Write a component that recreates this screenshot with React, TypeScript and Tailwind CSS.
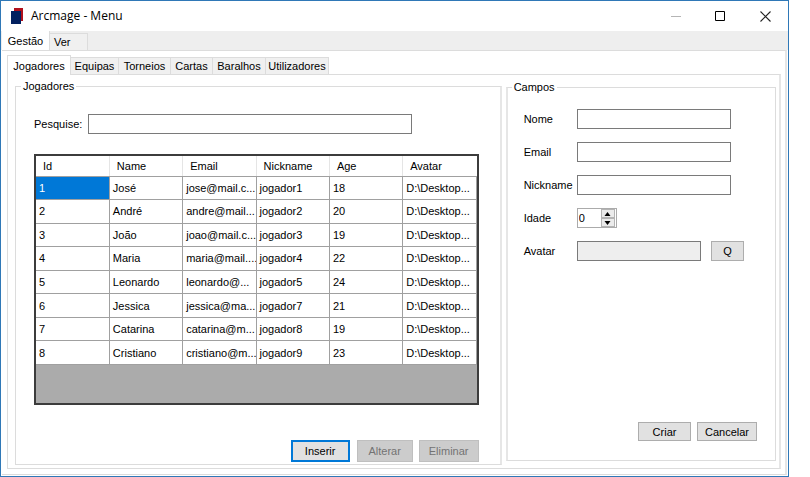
import { useState } from "react";

type Player = [string, string, string, string, string, string];

const columns = ["Id", "Name", "Email", "Nickname", "Age", "Avatar"];

const players: Player[] = [
  ["1", "José", "jose@mail.c...", "jogador1", "18", "D:\\Desktop..."],
  ["2", "André", "andre@mail...", "jogador2", "20", "D:\\Desktop..."],
  ["3", "João", "joao@mail.c...", "jogador3", "19", "D:\\Desktop..."],
  ["4", "Maria", "maria@mail....", "jogador4", "22", "D:\\Desktop..."],
  ["5", "Leonardo", "leonardo@...", "jogador5", "24", "D:\\Desktop..."],
  ["6", "Jessica", "jessica@ma...", "jogador7", "21", "D:\\Desktop..."],
  ["7", "Catarina", "catarina@m...", "jogador8", "19", "D:\\Desktop..."],
  ["8", "Cristiano", "cristiano@m...", "jogador9", "23", "D:\\Desktop..."],
];

const innerTabs = [
  { name: "Equipas", width: "w-12" },
  { name: "Torneios", width: "w-[52px]" },
  { name: "Cartas", width: "w-[42px]" },
  { name: "Baralhos", width: "w-[53px]" },
  { name: "Utilizadores", width: "w-[63px]" },
];

const textBox = "h-5 border border-[#7a7a7a] bg-white px-1 outline-none";
const pushButton = "border border-[#adadad] bg-[#e1e1e1] text-center";
const disabledButton = "h-[22px] border border-[#bfbfbf] bg-[#cccccc] text-center text-[#737373]";

function TitleBar() {
  return (
    <header className="flex h-[30px] shrink-0 items-center bg-white pl-[10px]">
      <svg width="12" height="17" viewBox="0 0 12 17" aria-hidden="true">
        <path d="M3 0h9v13H3z" fill="#b0101c" />
        <path d="M0 3h10v13H0z" fill="#02205f" />
      </svg>
      <h1 className="ml-2 font-['Open_Sans','Noto_Sans',sans-serif] text-xs leading-4">
        Arcmage - Menu
      </h1>
      <div className="ml-auto flex">
        <button aria-label="Minimizar" className="flex h-[30px] w-[45px] items-center justify-center">
          <svg width="11" height="11" viewBox="0 0 11 11">
            <path d="M1 5.5h10" stroke="#b5b5b5" />
          </svg>
        </button>
        <button aria-label="Maximizar" className="flex h-[30px] w-[45px] items-center justify-center">
          <svg width="11" height="11" viewBox="0 0 11 11">
            <path d="M.5 .5h9v9h-9z" fill="none" stroke="#000" />
          </svg>
        </button>
        <button aria-label="Fechar" className="flex h-[30px] w-[45px] items-center justify-center">
          <svg width="11" height="11" viewBox="0 0 11 11">
            <path d="M.5 .5l10 10M10.500 .5l-10 10" stroke="#222" strokeWidth="1.100" />
          </svg>
        </button>
      </div>
    </header>
  );
}

function PlayersGrid() {
  return (
    <div className="mt-5 border-2 border-[#3c3c3c] bg-[#ababab] pb-[38px]">
      <table className="h-[209px] w-full table-fixed border-collapse bg-white text-left">
        <thead>
          <tr className="h-5">
            {columns.map((c) => (
              <th
                key={c}
                className="border-r border-b border-r-[#e5e5e5] border-b-[#a0a0a0] pl-[7px] font-normal last:border-r-0"
              >
                {c}
              </th>
            ))}
          </tr>
        </thead>
        <tbody>
          {players.map((row, r) => (
            <tr key={row[0]}>
              {row.map((cell, c) => (
                <td
                  key={c}
                  className={
                    r === 0 && c === 0
                      ? "border-r border-b border-[#a0a0a0] bg-[#0078d7] pl-[3px] text-white"
                      : "overflow-hidden border-r border-b border-[#a0a0a0] pl-[3px] whitespace-nowrap"
                  }
                >
                  {cell}
                </td>
              ))}
            </tr>
          ))}
        </tbody>
      </table>
    </div>
  );
}

function PlayersPanel() {
  return (
    <fieldset className="flex min-w-0 flex-col border border-r-2 border-[#dcdcdc] border-r-[#e6e6e6] pr-[21px] pb-[2px] pl-[18px]">
      <legend className="-ml-[13px] px-[2px]">Jogadores</legend>
      <div className="mt-5 flex items-center">
        <label htmlFor="pesquise" className="w-[54px] shrink-0">
          Pesquise:
        </label>
        <input id="pesquise" className={`${textBox} mr-[67px] min-w-0 flex-1`} />
      </div>
      <PlayersGrid />
      <div className="mt-auto flex justify-end">
        <button className="h-[22px] w-[59px] border-2 border-[#0078d7] bg-[#e1e1e1]">Inserir</button>
        <button disabled className={`${disabledButton} ml-[7px] w-[56px]`}>
          Alterar
        </button>
        <button disabled className={`${disabledButton} ml-[6px] w-[60px]`}>
          Eliminar
        </button>
      </div>
    </fieldset>
  );
}

function FieldsPanel() {
  const [age, setAge] = useState(0);
  return (
    <fieldset className="mt-px mb-1 flex min-w-0 flex-col border border-l-2 border-[#dcdcdc] border-l-[#e6e6e6] pr-[18px] pb-[19px] pl-4">
      <legend className="-ml-3 px-[2px]">Campos</legend>
      <div className="mt-[14px] grid grid-cols-[53px_minmax(0,1fr)] items-center gap-y-[13px] pr-[26px]">
        <label htmlFor="nome">Nome</label>
        <input id="nome" className={`${textBox} w-full`} />
        <label htmlFor="email">Email</label>
        <input id="email" className={`${textBox} w-full`} />
        <label htmlFor="nickname">Nickname</label>
        <input id="nickname" className={`${textBox} w-full`} />
        <label htmlFor="idade">Idade</label>
        <div className="flex h-5 w-10 border border-[#ababab] bg-white">
          <input
            id="idade"
            type="number"
            value={age}
            onChange={(e) => setAge(Number(e.target.value))}
            className="w-[23px] appearance-none pl-px outline-none [-moz-appearance:textfield] [&::-webkit-inner-spin-button]:appearance-none"
          />
          <div className="flex flex-1 flex-col pr-px">
            <button
              aria-label="Aumentar"
              onClick={() => setAge(age + 1)}
              className="flex h-[9px] items-center justify-center border border-[#b4b4b4] bg-[#ebebeb]"
            >
              <svg width="7" height="4" viewBox="0 0 7 4">
                <path d="M3.500 0L6.500 4H.5z" />
              </svg>
            </button>
            <button
              aria-label="Diminuir"
              onClick={() => setAge(Math.max(0, age - 1))}
              className="flex h-[9px] items-center justify-center border border-[#b4b4b4] bg-[#ebebeb]"
            >
              <svg width="7" height="4" viewBox="0 0 7 4">
                <path d="M3.500 4L6.500 0H.5z" />
              </svg>
            </button>
          </div>
        </div>
        <label htmlFor="avatar">Avatar</label>
        <div className="-mr-[13px] flex items-center gap-[10px]">
          <input
            id="avatar"
            readOnly
            className="h-5 min-w-0 flex-1 border border-[#7a7a7a] bg-[#eeeeee] px-1 outline-none"
          />
          <button className={`${pushButton} h-5 w-[33px]`}>Q</button>
        </div>
      </div>
      <div className="mt-auto flex justify-end gap-[6px]">
        <button className={`${pushButton} h-[19px] w-[53px]`}>Criar</button>
        <button className={`${pushButton} h-[19px] w-[60px]`}>Cancelar</button>
      </div>
    </fieldset>
  );
}

export default function App() {
  return (
    <div className="flex min-h-screen bg-white pr-[21px] font-['Liberation_Sans',Arial,sans-serif] text-[11px] leading-4 text-black">
      <main className="flex min-w-0 flex-1 flex-col border border-[#2f78b7] bg-white">
        <TitleBar />
        <nav className="flex h-[19px] shrink-0 items-end bg-[#eeeeee] pl-px">
          <button className="h-[19px] w-12 border-r border-[#dcdcdc] bg-white">Gestão</button>
          <button className="h-[17px] w-[38px] border-t border-r border-[#dcdcdc] bg-[#f0f0f0] pl-1 text-left">
            Ver
          </button>
        </nav>
        <div className="mr-px mb-px ml-px flex flex-1 flex-col border-t border-r-2 border-b border-[#dcdcdc] border-r-[#e6e6e6] pt-1 pr-1 pb-[5px] pl-[5px]">
          <nav className="flex shrink-0 items-end">
            <button className="z-10 -mb-px h-5 w-16 border border-b-0 border-[#dcdcdc] bg-white">
              Jogadores
            </button>
            {innerTabs.map((t) => (
              <button
                key={t.name}
                className={`${t.width} h-[17px] border-t border-r border-[#dcdcdc] bg-[#f0f0f0] text-center leading-[17px] whitespace-nowrap`}
              >
                {t.name}
              </button>
            ))}
          </nav>
          <div className="grid flex-1 grid-cols-[486fr_270fr] gap-1 border border-r-2 border-[#dcdcdc] border-r-[#e6e6e6] pt-[3px] pr-[3px] pb-[3px] pl-[7px]">
            <PlayersPanel />
            <FieldsPanel />
          </div>
        </div>
      </main>
    </div>
  );
}
